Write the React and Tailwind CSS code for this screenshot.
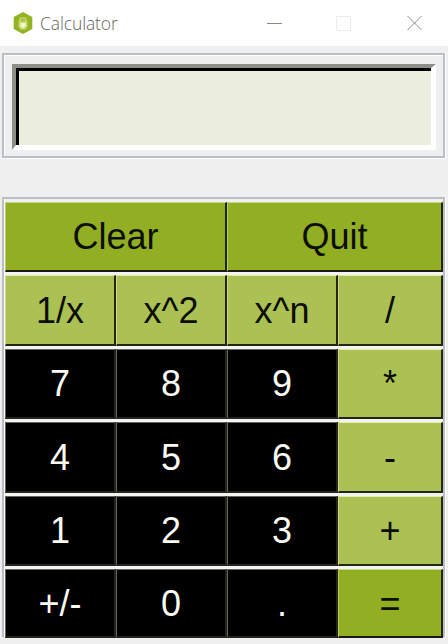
import React from "react";

const tones = {
  dark: "bg-black text-[#fafaf2] border-t-[#66665f] border-l-[#66665f] border-r-[#24241a] border-b-[#24241a]",
  lime: "bg-[#acc154] text-[#0c0e04] border-t-[#e4eda4] border-l-[#d8d68a] border-r-[#23270f] border-b-[#23270f]",
  green: "bg-[#92ae22] text-[#0c0e04] border-t-[#c6d987] border-l-[#b5cf62] border-r-[#20230e] border-b-[#1c1a08]",
};

const rows = [
  { height: "h-[70px]", keys: [["Clear", "green"], ["Quit", "green"]] },
  { height: "h-[71px]", keys: [["1/x", "lime"], ["x^2", "lime"], ["x^n", "lime"], ["/", "lime"]] },
  { height: "h-[70px]", keys: [["7", "dark"], ["8", "dark"], ["9", "dark"], ["*", "lime"]] },
  { height: "h-[71px]", keys: [["4", "dark"], ["5", "dark"], ["6", "dark"], ["-", "lime"]] },
  { height: "h-[70px]", keys: [["1", "dark"], ["2", "dark"], ["3", "dark"], ["+", "lime"]] },
  { height: "h-[69px]", keys: [["+/-", "dark"], ["0", "dark"], [".", "dark"], ["=", "green"]] },
];

function Key({ label, tone }) {
  return (
    <button
      className={`flex items-center justify-center border-t border-l border-r-2 border-b-2 pt-px text-[36px] leading-none ${tones[tone]}`}
    >
      {label}
    </button>
  );
}

function TitleBar() {
  return (
    <header className="flex h-[46px] items-center bg-white">
      <svg className="ml-[13px] h-[22px] w-5" viewBox="0 0 20 22">
        <path d="M10 0 19.3 5v12L10 22 .7 17V5Z" fill="#94b321" />
        <path d="M7 5.6h6l1.4 4.6v4.2L12.6 17.4h-5.2l-1.8-3v-4.2Z" fill="#cadb78" />
        <path d="M7.7 6.7h4.6v2.6H7.7Z" fill="#a6bf43" />
        <path d="M7.6 11h5v3L10.1 16.2l-2.5-2.2Z" fill="#f4f8cf" />
      </svg>
      <h1 className="mt-0.5 ml-[7px] font-['Open_Sans'] text-[17.5px] leading-none font-light tracking-[-0.12px] text-[#66665e]">
        Calculator
      </h1>
      <div className="mr-[26px] ml-auto flex items-center">
        <svg width="156" height="16" viewBox="0 0 156 16" fill="none">
          <path d="M1 8.5h15" stroke="#8c8b80" />
          <path d="M70.5 1.5h14v14h-14Z" stroke="#ededea" />
          <path d="m141.5 1 14 14m0-14-14 14" stroke="#8c8b80" />
        </svg>
      </div>
    </header>
  );
}

export default function App() {
  return (
    <main className="h-[644px] w-[448px] overflow-hidden bg-[#efefef] font-['Liberation_Sans',sans-serif]">
      <TitleBar />
      <section className="mt-[7px] ml-[2px] h-[106px] w-[444px] border-r border-b border-white">
        <div className="h-full border-2 border-[#b9bfc3]">
          <div className="h-full border-t border-l border-white pt-[8px] pl-[7px]">
            <div className="h-[86px] w-[424px] border-t-4 border-r-[5px] border-b-[5px] border-l-4 border-t-[#8f8f89] border-r-white border-b-white border-l-[#8f8f89]">
              <div className="h-full border-t-[3px] border-l-[3px] border-black bg-[#ebeddf]" />
            </div>
          </div>
        </div>
      </section>
      <section className="mt-[38px] ml-[2px] h-[441px] w-[444px] border-r border-white">
        <div className="flex h-[440px] border-t-2 border-r-2 border-l-2 border-[#b9bfc3]">
          <div className="w-[439px] shrink-0 border-l border-white pt-[3px]">
            <div className="flex flex-col gap-[3px] bg-[#f3f3f4]">
              {rows.map(({ height, keys }) => (
                <div
                  key={keys[0][0]}
                  className={`grid ${height} ${keys.length === 2 ? "grid-cols-[222px_216px]" : "grid-cols-[111px_111px_111px_105px]"}`}
                >
                  {keys.map(([label, tone]) => (
                    <Key key={label} label={label} tone={tone} />
                  ))}
                </div>
              ))}
            </div>
          </div>
        </div>
      </section>
    </main>
  );
}
